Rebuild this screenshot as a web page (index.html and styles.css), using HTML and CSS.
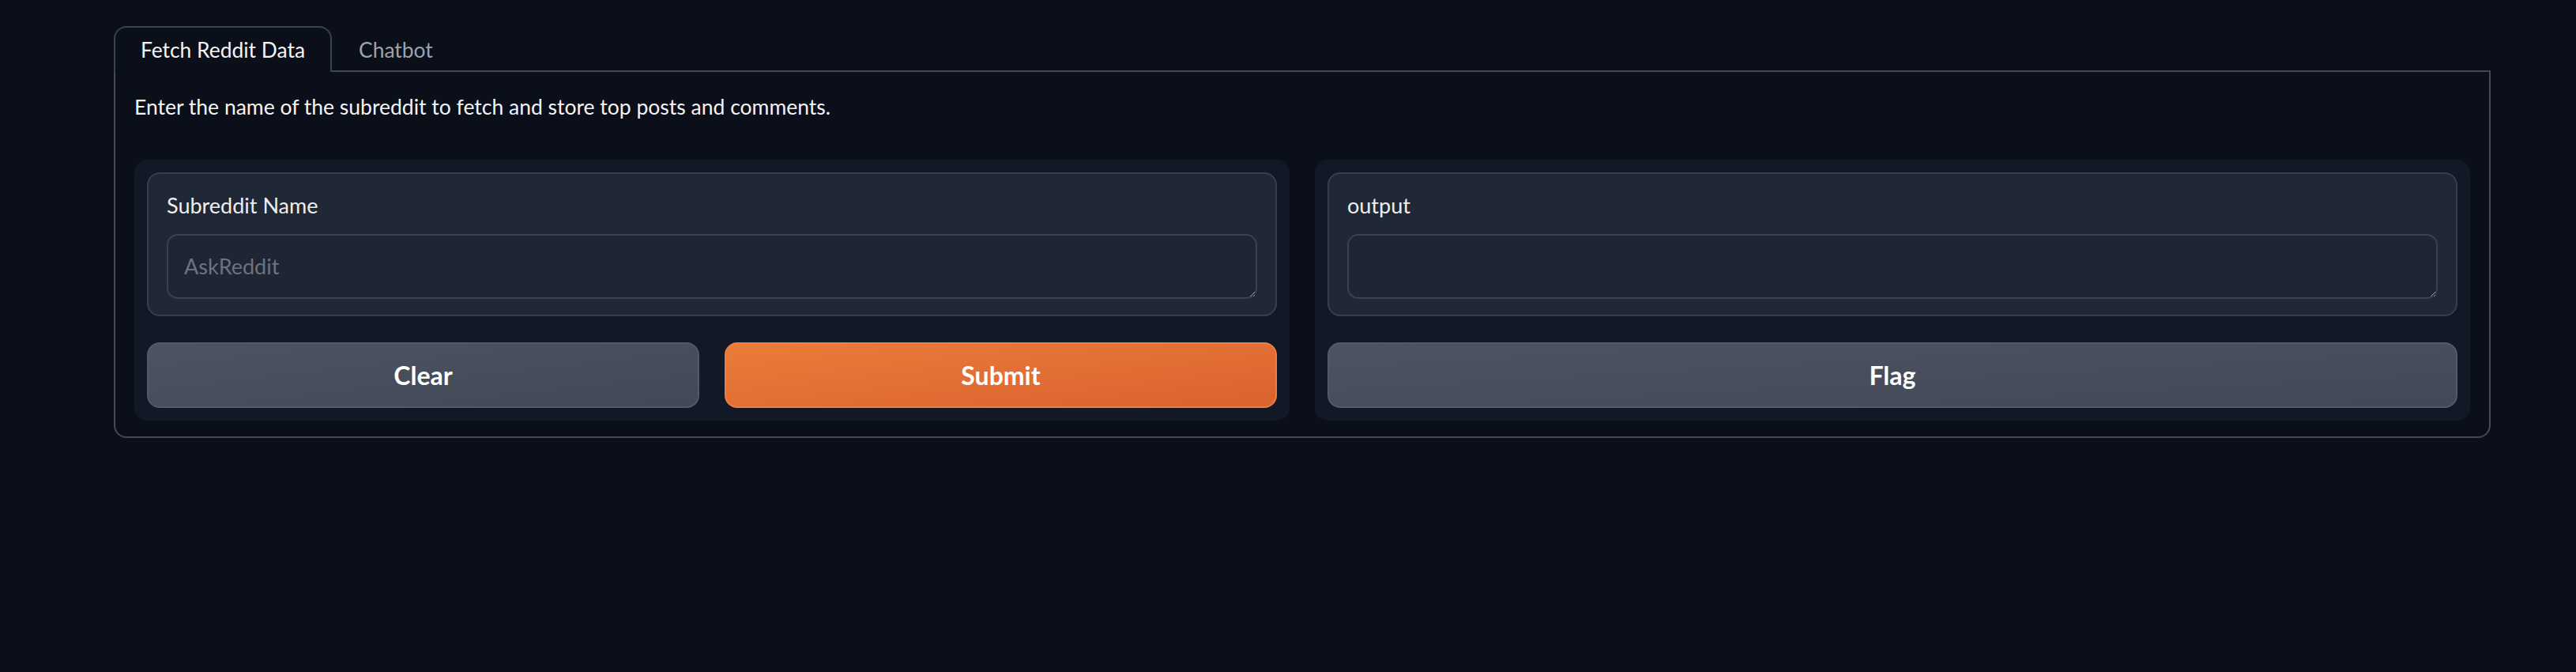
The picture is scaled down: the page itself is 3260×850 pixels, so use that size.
FILE: index.html
```html
<!DOCTYPE html>
<html lang="en">
<head>
<meta charset="utf-8">
<title>Reddit Data</title>
<link rel="stylesheet" href="styles.css">
</head>
<body>
<div class="app">
  <div class="tab-nav">
    <button class="tab selected">Fetch Reddit Data</button>
    <button class="tab">Chatbot</button>
  </div>
  <div class="tabitem">
    <p class="desc">Enter the name of the subreddit to fetch and store top posts and comments.</p>
    <div class="row">
      <div class="group">
        <label class="block">
          <span class="label">Subreddit Name</span>
          <textarea class="input" rows="1" placeholder="AskReddit"></textarea>
        </label>
        <div class="buttons">
          <button class="btn secondary">Clear</button>
          <button class="btn primary">Submit</button>
        </div>
      </div>
      <div class="group">
        <label class="block">
          <span class="label">output</span>
          <textarea class="input" rows="1"></textarea>
        </label>
        <div class="buttons">
          <button class="btn secondary">Flag</button>
        </div>
      </div>
    </div>
  </div>
</div>
</body>
</html>
```

FILE: styles.css
```css
* {
  box-sizing: border-box;
}

:root {
  color-scheme: dark;
}

html,
body {
  margin: 0;
  background: #0b0f19;
}

body {
  font-family: Lato, "Noto Sans", sans-serif;
  color: #f3f4f6;
}

.app {
  width: 3008px;
  margin: 33px 0 0 144px;
}

.tab-nav {
  display: flex;
  height: 58px;
  border-bottom: 2px solid #434957;
}

.tab {
  height: 58px;
  margin: 0 0 -2px 0;
  padding: 0 32px;
  font-family: inherit;
  font-size: 26.4px;
  color: #9ca3af;
  background: transparent;
  border: 2px solid transparent;
  border-bottom: none;
  border-radius: 16px 16px 0 0;
}

.tab.selected {
  color: #f3f4f6;
  background: #0b0f19;
  border-color: #3a4150;
}

.tabitem {
  padding: 24px 24px 20px;
  border: 2px solid #434957;
  border-top: none;
  border-radius: 0 0 16px 16px;
}

.desc {
  margin: 0 0 47px;
  font-size: 26.5px;
  line-height: 40px;
  color: #f3f4f6;
}

.row {
  display: flex;
  gap: 32px;
}

.group {
  flex: 1;
  display: flex;
  flex-direction: column;
  gap: 33px;
  padding: 16px;
  background: #121826;
  border-radius: 16px;
}

.block {
  display: block;
  padding: 20px 23px;
  background: #212835;
  border: 2px solid #373e4c;
  border-radius: 16px;
}

.label {
  display: block;
  margin-bottom: 16px;
  font-size: 27px;
  line-height: 40px;
  color: #eceef1;
}

.input {
  display: block;
  width: 100%;
  height: 82px;
  padding: 19px 20px;
  font-family: inherit;
  font-size: 27px;
  line-height: 40px;
  color: #e5e7eb;
  background: #1f2532;
  border: 2px solid #3a4150;
  border-radius: 14px;
  resize: vertical;
  outline: none;
}

.input::placeholder {
  color: #6b7280;
}

.buttons {
  display: flex;
  gap: 32px;
}

.btn {
  flex: 1;
  height: 83px;
  font-family: inherit;
  font-size: 32px;
  font-weight: 700;
  color: #ffffff;
  border: 2px solid;
  border-radius: 16px;
}

.btn.secondary {
  background: linear-gradient(to bottom right, #4c5362, #424856);
  border-color: #525968;
}

.btn.primary {
  background: linear-gradient(to bottom right, #ea7c3a, #da6230);
  border-color: #ee7f3e;
}
```
